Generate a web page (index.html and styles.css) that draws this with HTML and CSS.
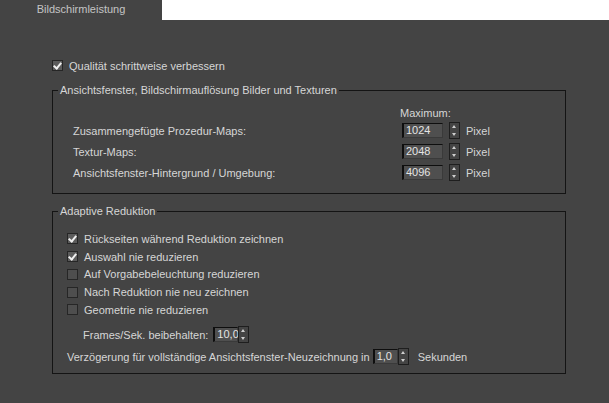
FILE: index.html
```html
<!DOCTYPE html>
<html lang="de">
  <head>
    <meta charset="UTF-8" />
    <title>Bildschirmleistung</title>
    <link rel="stylesheet" href="styles.css">
  </head>
  <body>
    <div class="tabbar">
      <div class="tab">Bildschirmleistung</div>
      <div class="tab-rest"></div>
    </div>

    <div class="panel">
      <label class="check top-check">
        <span class="box checked"></span>Qualität schrittweise verbessern
      </label>

      <fieldset class="group">
        <legend>Ansichtsfenster, Bildschirmauflösung Bilder und Texturen</legend>
        <div class="group-maps">
          <div class="max-label">Maximum:</div>
          <div class="map-row">
            <span class="map-name">Zusammengefügte Prozedur-Maps:</span>
            <span class="spinner"><span class="field wide">1024</span><span class="arrows"></span></span>
            <span class="unit">Pixel</span>
          </div>
          <div class="map-row">
            <span class="map-name">Textur-Maps:</span>
            <span class="spinner"><span class="field wide">2048</span><span class="arrows"></span></span>
            <span class="unit">Pixel</span>
          </div>
          <div class="map-row">
            <span class="map-name">Ansichtsfenster-Hintergrund / Umgebung:</span>
            <span class="spinner"><span class="field wide">4096</span><span class="arrows"></span></span>
            <span class="unit">Pixel</span>
          </div>
        </div>
      </fieldset>

      <fieldset class="group group-second">
        <legend>Adaptive Reduktion</legend>
        <div class="group-adaptive">
          <div class="check-list">
            <label class="check"><span class="box checked"></span>Rückseiten während Reduktion zeichnen</label>
            <label class="check"><span class="box checked"></span>Auswahl nie reduzieren</label>
            <label class="check"><span class="box"></span>Auf Vorgabebeleuchtung reduzieren</label>
            <label class="check"><span class="box"></span>Nach Reduktion nie neu zeichnen</label>
            <label class="check"><span class="box"></span>Geometrie nie reduzieren</label>
          </div>
          <div class="fps-row">
            <span>Frames/Sek. beibehalten:</span>
            <span class="spinner"><span class="field narrow">10,0</span><span class="arrows"></span></span>
          </div>
          <div class="delay-row">
            <span>Verzögerung für vollständige Ansichtsfenster-Neuzeichnung in</span>
            <span class="spinner"><span class="field narrow">1,0</span><span class="arrows"></span></span>
            <span class="unit">Sekunden</span>
          </div>
        </div>
      </fieldset>
    </div>
  </body>
</html>
```

FILE: styles.css
```css
body {
  background: #444;
  color: #d6d6d6;
  font-family: "Liberation Sans", Arial, sans-serif;
  font-size: 11px;
  margin: 0;
  width: 609px;
  height: 403px;
  overflow: hidden;
}
.tabbar {
  display: flex;
  height: 20px;
}
.tab {
  width: 162px;
  text-align: center;
  line-height: 19px;
  color: #c4c4c4;
}
.tab-rest {
  flex: 1;
  background: #fff;
}
.panel {
  padding: 37px 43px 0 52px;
}
.check {
  display: flex;
  align-items: center;
  height: 17px;
}
.box {
  width: 9px;
  height: 9px;
  border: 1px solid #262626;
  background: #4e4e4e;
  margin-right: 6px;
  position: relative;
}
.box.checked {
  background: #5c5c5c;
}
.box.checked::after {
  content: "";
  position: absolute;
  left: 2px;
  top: 0px;
  width: 3px;
  height: 6px;
  border: solid #f0f0f0;
  border-width: 0 2px 2px 0;
  transform: rotate(40deg);
}
.top-check {
  margin-bottom: 9px;
}
.group {
  border: 1px solid #141414;
  margin: 0;
  padding: 0;
}
.group legend {
  padding: 0 2px;
  margin-left: 5px;
  line-height: 14px;
}
.group-maps {
  padding: 9px 0 10px 20px;
}
.max-label {
  margin-left: 327px;
  height: 14px;
  line-height: 14px;
}
.map-row {
  display: flex;
  align-items: center;
  height: 21px;
}
.map-name {
  width: 329px;
}
.spinner {
  display: inline-flex;
  align-items: center;
}
.field {
  height: 13px;
  line-height: 13px;
  background: #4f4f4f;
  border-top: 1px solid #0e0e0e;
  border-left: 2px solid #0e0e0e;
  border-right: 1px solid #3a3a3a;
  border-bottom: 1px solid #3a3a3a;
  padding-left: 2px;
  color: #e4e4e4;
}
.field.wide {
  width: 36px;
  margin-right: 6px;
}
.field.narrow {
  width: 20px;
}
.arrows {
  width: 9px;
  height: 15px;
  border: 1px solid #1e1e1e;
  background: #444;
  position: relative;
}
.arrows::before,
.arrows::after {
  content: "";
  position: absolute;
  left: 2px;
  border-left: 2.5px solid transparent;
  border-right: 2.5px solid transparent;
}
.arrows::before {
  top: 2px;
  border-bottom: 3px solid #cfcfcf;
}
.arrows::after {
  bottom: 2px;
  border-top: 3px solid #cfcfcf;
}
.unit {
  margin-left: 6px;
}
.group-second {
  margin-top: 10px;
}
.group-adaptive {
  padding: 12px 0 6px 14px;
}
.check-list .check {
  height: 17.75px;
}
.fps-row {
  display: flex;
  align-items: center;
  gap: 5px;
  margin: 6px 0 0 16px;
  height: 20px;
}
.delay-row {
  display: flex;
  align-items: center;
  height: 20px;
  margin-top: 2px;
}
.delay-row > span:first-child {
  margin-right: 3px;
}
.delay-row .unit {
  margin-left: 9px;
}
```
